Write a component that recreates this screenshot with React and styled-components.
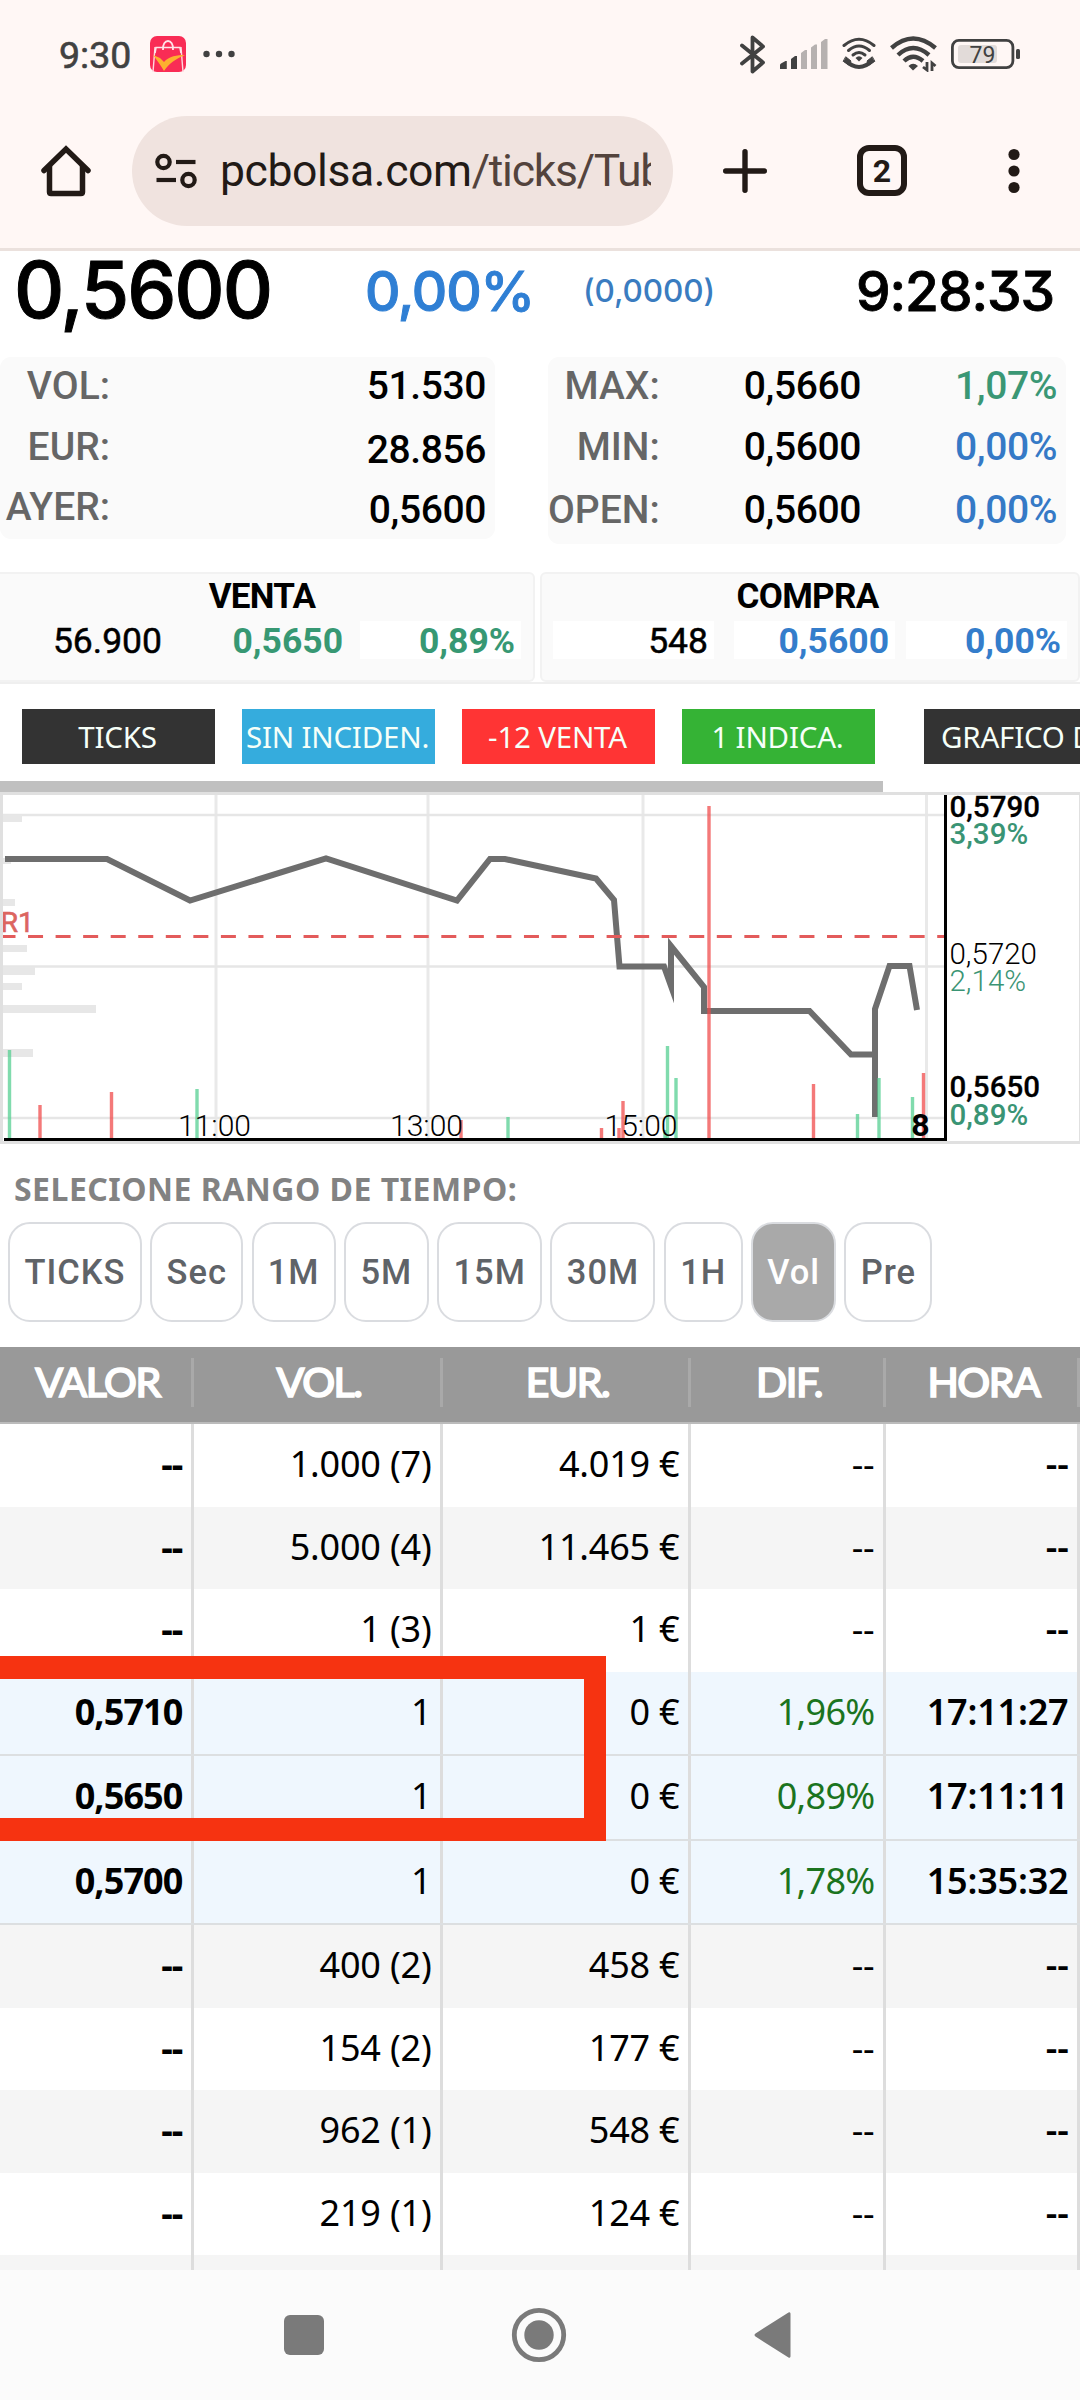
import React, { useState } from 'react';
import styled, { createGlobalStyle } from 'styled-components';

const GlobalStyle = createGlobalStyle`
    body{
        margin:0;
        background:#fff;
        font-family:Roboto, sans-serif;
    }
    *{
        box-sizing:border-box;
    }
`;

const Phone = styled.div`
    width:1080px;
    height:2400px;
    display:flex;
    flex-direction:column;
    overflow:hidden;
    background:#fff;
    color:#000;
    svg{
        display:block;
        flex:none;
    }
`;

/* ---------- android status bar ---------- */

const StatusBar = styled.div`
    height:108px;
    flex:none;
    display:flex;
    align-items:center;
    padding:0 59px 0 59px;
    background:#fff7f5;
    color:#414141;
`;

const Clock = styled.span`
    width:91px;
    font-size:37.5px;
    line-height:40px;
    padding-top:2px;
    -webkit-text-stroke:0.6px #414141;
`;

const StatusIcons = styled.div`
    margin-left:auto;
    display:flex;
    align-items:center;
    gap:14px;
`;

/* ---------- browser toolbar ---------- */

const Toolbar = styled.div`
    height:143px;
    flex:none;
    display:flex;
    align-items:center;
    padding:0 0 15px 41px;
    background:#fff7f5;
    border-bottom:3px solid #ebe1dd;
`;

const Omnibox = styled.div`
    width:541px;
    height:110px;
    margin:0 50px 0 41px;
    padding:0 22px 0 23px;
    display:flex;
    align-items:center;
    border-radius:55px;
    background:#f0e3df;
`;

const Url = styled.div`
    flex:1;
    margin-left:23px;
    overflow:hidden;
    white-space:nowrap;
    font-size:44.5px;
    line-height:70px;
    letter-spacing:-0.4px;
    color:#221a16;
    span{
        letter-spacing:-1.25px;
        color:#53433d;
    }
`;

const TabCount = styled.div`
    width:50px;
    height:51px;
    margin:0 101px 0 90px;
    border:6px solid #221a16;
    border-radius:12px;
    text-align:center;
    font-size:32px;
    line-height:40px;
    font-weight:700;
    color:#221a16;
`;

/* ---------- quote head ---------- */

const QuoteHead = styled.div`
    height:106px;
    flex:none;
    display:grid;
    grid-template-columns:363px 208px 200px 1fr;
    padding:0 26px 0 12px;
    font-family:Inter, sans-serif;
    font-weight:500;
    font-feature-settings:'cv09';
    line-height:1;
    white-space:nowrap;
`;

const LastPrice = styled.span`
    margin-left:2px;
    font-size:78px;
    letter-spacing:-2px;
    -webkit-text-stroke:1px #000;
`;

const LastChange = styled.span`
    margin-top:13px;
    margin-left:-10px;
    font-size:55px;
    letter-spacing:-1.2px;
    color:#2f7fd4;
    -webkit-text-stroke:1px #2f7fd4;
`;

const LastDiff = styled.span`
    margin-top:24px;
    font-size:31.5px;
    letter-spacing:-0.1px;
    color:#3a7cc0;
`;

const LastTime = styled.span`
    margin-top:13px;
    text-align:right;
    font-size:55px;
    letter-spacing:-1.1px;
    -webkit-text-stroke:0.8px #000;
`;

/* ---------- day stats ---------- */

const Stats = styled.div`
    height:215px;
    flex:none;
    display:flex;
    align-items:flex-start;
    gap:53px;
`;

const StatBox = styled.div`
    width:${p => p.$width}px;
    height:${p => p.$height}px;
    display:flex;
    border-radius:11px;
    background:#fafafa;
    font-size:39px;
    font-weight:500;
    line-height:60px;
    text-align:right;
    white-space:nowrap;
`;

const StatCol = styled.div`
    width:${p => p.$width}px;
    height:184px;
    margin-top:-1px;
    display:grid;
    grid-template-rows:${p => p.$rows};
    letter-spacing:${p => p.$label ? '0' : '-0.4px'};
    color:${p => p.$label ? '#666' : '#000'};
`;

const Amount = styled.span`
    color:${p => p.$tone === 'up' ? '#3a9775' : p.$tone === 'flat' ? '#3579c6' : 'inherit'};
`;

/* ---------- bid / ask ---------- */

const Book = styled.div`
    height:112px;
    flex:none;
    display:flex;
    gap:5px;
    border-bottom:2px solid #efefef;
`;

const Side = styled.div`
    width:${p => p.$first ? 535 : 540}px;
    height:110px;
    padding:2px ${p => p.$first ? '11px 0 7px' : '11px 0 11px'};
    border:2px solid #f2f2f2;
    ${p => p.$first && 'border-left:0;'}
    border-radius:${p => p.$first ? '0 6px 6px 0' : '6px'};
    background:#fafafa;
`;

const SideTitle = styled.div`
    height:45px;
    padding-right:5px;
    line-height:42px;
    font-size:35px;
    font-weight:700;
    letter-spacing:-0.7px;
    text-align:center;
`;

const SideRow = styled.div`
    display:grid;
    grid-template-columns:181px 172px 161px;
`;

const SideCell = styled.div`
    width:161px;
    height:38px;
    padding-right:6px;
    line-height:40px;
    font-size:35.5px;
    font-weight:${p => p.$tone ? 700 : 400};
    -webkit-text-stroke:${p => p.$tone ? '0' : '0.5px #000'};
    text-align:right;
    background:${p => p.$flash ? '#fff' : 'transparent'};
    color:${p => p.$tone === 'up' ? '#379873' : p.$tone === 'flat' ? '#347dcb' : '#000'};
`;

/* ---------- links strip ---------- */

const Strip = styled.div`
    height:97px;
    flex:none;
    display:flex;
    align-items:flex-start;
    padding:25px 0 0 22px;
    overflow:hidden;
`;

const StripButton = styled.button`
    width:193px;
    height:55px;
    flex:none;
    margin:0 ${p => p.$gap || 27}px 0 0;
    padding:0 2px 0 0;
    border:0;
    background:${p => p.$bg};
    color:#f6fff8;
    font-family:"Noto Sans", sans-serif;
    font-size:29.5px;
    line-height:55px;
    letter-spacing:-0.2px;
    white-space:nowrap;
    text-align:${p => p.$cut ? 'left' : 'center'};
    ${p => p.$cut && 'padding-left:17px;'}
`;

const ScrollThumb = styled.div`
    width:883px;
    height:11px;
    flex:none;
    background:#c0c0c0;
`;

/* ---------- chart ---------- */

const ChartFrame = styled.div`
    height:352px;
    flex:none;
    overflow:hidden;
    border:3px solid #e0e0e0;
    border-right-width:1px;
`;

/* ---------- time range ---------- */

const RangeTitle = styled.div`
    height:78px;
    flex:none;
    padding:24px 0 0 14px;
    font-family:"Noto Sans", sans-serif;
    font-size:32px;
    font-weight:700;
    line-height:42px;
    letter-spacing:0.48px;
    color:#828282;
    white-space:nowrap;
`;

const Ranges = styled.div`
    height:125px;
    flex:none;
    display:flex;
    gap:8.3px;
    padding-left:8px;
`;

const RangeButton = styled.button`
    width:${p => p.$width}px;
    height:100px;
    padding:0;
    border:2px solid #dadce0;
    border-radius:22px;
    background:${p => p.$active ? '#a9a9a9' : '#fff'};
    color:${p => p.$active ? '#fff' : '#5f6368'};
    font-family:Roboto, sans-serif;
    font-size:34.5px;
    font-weight:500;
    letter-spacing:1px;
`;

/* ---------- ticks table ---------- */

const columns = '194px 249px 248px 195px 194px';

const TableWrap = styled.div`
    height:923px;
    flex:none;
    position:relative;
    overflow:hidden;
`;

const HeadRow = styled.div`
    height:77px;
    display:grid;
    grid-template-columns:${columns};
    align-items:start;
    padding-top:11px;
    background:#999;
    border-bottom:2px solid #bbb;
`;

const HeadCell = styled.div`
    height:49px;
    padding-left:4px;
    border-right:3px solid #a9a9a9;
    color:#fff;
    font-family:Lato, sans-serif;
    font-size:41px;
    font-weight:500;
    line-height:48px;
    letter-spacing:-1.5px;
    text-align:center;
    -webkit-text-stroke:1.6px #fff;
`;

const Row = styled.div`
    height:${p => p.$single ? 84.5 : 82.5}px;
    display:grid;
    grid-template-columns:${columns};
    background:${p => p.$single ? '#eff7fe' : p.$odd ? '#f5f5f5' : '#fff'};
    border-bottom:${p => p.$single ? '2px solid #dcdfe1' : '0'};
`;

const Cell = styled.div`
    padding-right:8.5px;
    border-right:3px solid #ddd;
    font-family:"Noto Sans", sans-serif;
    font-size:36px;
    font-weight:${p => p.$weight || 400};
    line-height:80px;
    letter-spacing:${p => p.$weight === 700 ? '-0.9px' : p.$up ? '-0.7px' : '-0.2px'};
    text-align:right;
    white-space:nowrap;
    color:${p => p.$up ? '#1b741f' : '#000'};
`;

const Marker = styled.div`
    position:absolute;
    left:-30px;
    top:309px;
    width:636px;
    height:185px;
    border:solid #f63311;
    border-width:23px 22px 23px 22px;
`;

/* ---------- android nav bar ---------- */

const NavBar = styled.div`
    height:130px;
    flex:none;
    display:flex;
    align-items:center;
    padding-left:284px;
    background:#fbfbfb;
`;

const AppBadge = () => (
    <svg width="36" height="36" viewBox="0 0 36 36">
        <rect width="36" height="36" rx="7" fill="#f92c55" />
        <path d="M5 11 L3 36 M31 11 L33 36" stroke="#ffd9df" strokeWidth="1.4" fill="none" />
        <path d="M5 17 L6 11.500 H30 L31 17" stroke="#ffe3e8" strokeWidth="1.600" fill="none" />
        <path d="M13 14 C12 2 24 2 23 14" stroke="#ffe3e8" strokeWidth="1.8" fill="none" />
        <path d="M3 19 L10 22 L14 26 C19 20 27 19 35 19 C26 23 19 27 14 35 C11 30 7 24 3 19Z" fill="#fdb02f" />
    </svg>
);

const BluetoothIcon = () => (
    <svg width="26" height="39" viewBox="0 0 26 39">
        <path d="M2 10.500 L23 27.500 L12.500 36.500 V2.500 L23 11.500 L2 28.500" fill="none" stroke="#414141" strokeWidth="3.8" strokeLinecap="round" strokeLinejoin="round" />
    </svg>
);

const SignalIcon = () => (
    <svg width="48" height="32" viewBox="0 0 48 32">
        <path d="M0 31 V27 Q0 26 1 25.500 L5.500 23 H6.800 V31Z" fill="#414141" />
        <path d="M11 31 V21 L15 18 H17 V31Z" fill="#414141" />
        <path d="M21 31 V15 L25 12 H27 V31Z M31 31 V9.500 L35 6.500 H37 V31Z M41 31 V4 L45 1 H47.500 V31Z" fill="#b6b1b0" />
    </svg>
);

const WifiCallIcon = () => (
    <svg width="34" height="34" viewBox="0 0 34 34" fill="none" stroke="#414141" strokeLinecap="round">
        <path d="M2 8.500 Q17 -4 32 8.500" strokeWidth="3" />
        <path d="M6.500 13.500 Q17 4.500 27.500 13.500" strokeWidth="3" />
        <path d="M11 18 Q17 13 23 18" strokeWidth="3" />
        <path d="M13.500 21 Q17 17.500 20.500 21 L17 24.500Z" fill="#414141" stroke="none" />
        <path d="M3 23 Q17 37 31 23" strokeWidth="4" strokeLinecap="butt" />
        <path d="M4 20 L9 24 L7 28 L1.500 24.500Z M30 20 L25 24 L27 28 L32.500 24.500Z" fill="#414141" stroke="#414141" strokeWidth="1" />
    </svg>
);

const WifiIcon = () => (
    <svg width="47" height="36" viewBox="0 0 47 36" fill="none" stroke="#414141" strokeWidth="4.400">
        <path d="M1.500 12 Q23 -7 45.500 12" />
        <path d="M8 19 Q23 5 39 19" />
        <path d="M14 25 Q23 16.500 33 25" />
        <path d="M18.500 30 Q23 25.500 28 30 L23 34.500Z" fill="#414141" stroke="none" />
        <path d="M37 26 V34 L33 31 M42 35 V27 L45.500 30" strokeWidth="2.800" />
    </svg>
);

const BatteryIcon = () => (
    <svg width="70" height="30" viewBox="0 0 70 30">
        <rect x="1.400" y="1.400" width="60.500" height="27.200" rx="6.500" fill="none" stroke="#414141" strokeWidth="2.800" />
        <rect x="7" y="6" width="39" height="18" rx="3" fill="#e2dbd9" />
        <rect x="65" y="10" width="4" height="10" rx="1.500" fill="#414141" />
        <text x="31.500" y="23.500" textAnchor="middle" fontFamily="Roboto, sans-serif" fontSize="23" fill="#414141">79</text>
    </svg>
);

const HomeIcon = () => (
    <svg width="50" height="52" viewBox="0 0 50 52">
        <path d="M3 25.500 L25 4 L47 25.500" fill="none" stroke="#221a16" strokeWidth="5.500" strokeLinecap="round" strokeLinejoin="miter" />
        <path d="M8.500 21 V47 Q8.500 48.500 10 48.500 H40 Q41.500 48.500 41.500 47 V21" fill="none" stroke="#221a16" strokeWidth="5.500" />
    </svg>
);

const SiteIcon = () => (
    <svg width="42" height="36" viewBox="0 0 42 36" fill="none" stroke="#221a16" strokeWidth="4.200">
        <circle cx="8.500" cy="9" r="6.200" />
        <path d="M21 9 H40.500" />
        <path d="M1.500 27 H21" />
        <circle cx="33.500" cy="27" r="6.200" />
    </svg>
);

const profile = [[20, 7, 19], [63, 6, 8], [104, 7, 12], [150, 7, 24], [172, 8, 32], [188, 7, 19], [210, 8, 93], [254, 8, 30]];

// [x, top, color]
const volumes = [
    [9.5, 1050, 'g'], [40, 1105, 'r'], [111.500, 1092, 'r'], [197, 1089, 'g'], [461, 1120, 'r'], [508, 1117, 'g'],
    [601.500, 1128, 'r'], [619, 1128, 'r'], [623, 1101, 'r'], [665, 1130, 'g'], [667.500, 1046, 'g'], [676, 1078, 'g'], [709, 806, 'r'],
    [813.500, 1084, 'r'], [857.500, 1114, 'g'], [879, 1078, 'g'], [912.500, 1097, 'g'], [923.500, 1073, 'r'],
];

const scale = [
    ['0,5790', 816.5, '3,39%', 843.5, 500],
    ['0,5720', 963.5, '2,14%', 990.5, 300],
    ['0,5650', 1096.5, '0,89%', 1125, 500],
];

const Chart = () => (
    <svg width="1076" height="346" viewBox="3 795 1076 346" fontFamily="Roboto, sans-serif">
        <path d="M216 795 V1138 M428 795 V1138 M643 795 V1138 M926.500 795 V1138" stroke="#e9e9e9" strokeWidth="3" />
        <path d="M3 815 H944 M3 966.500 H944 M3 1118 H944" stroke="#e6e6e6" strokeWidth="2.400" />
        {profile.map(([y, h, w]) => (
            <rect key={y} x="3" y={795 + y} width={w} height={h} fill="#e7e7e7" />
        ))}
        <path
            d="M5 859 H107 L190 900.500 L326 858.500 L457 900.500 L490 859 H505 L596 878.500 L614 900 L619.500 966.500 H664 L671 986 V946 L704 987 V1011 H809.500 L851 1054.500 H875 V1117 V1009 L889.500 966 H909.500 L917 1010"
            fill="none"
            stroke="#6e6e6e"
            strokeWidth="6"
            strokeMiterlimit="8"
        />
        {volumes.map(([x, top, c]) => (
            <path key={x} d={`M${x} ${top} V1138`} stroke={c === 'g' ? '#55cf92' : '#f04c4c'} strokeOpacity="0.75" strokeWidth="3.400" />
        ))}
        <path d="M0.500 936.500 H944" stroke="#e35b5b" strokeWidth="3" strokeDasharray="15 12.550" />
        <text x="0.500" y="932" fontSize="28.500" fill="#dc655f" stroke="#dc655f" strokeWidth="0.600">R1</text>
        <g fontSize="30" fontWeight="300" textAnchor="middle" fill="#000">
            <text x="214.500" y="1136">11:00</text>
            <text x="426.500" y="1136">13:00</text>
            <text x="641" y="1136">15:00</text>
            <text x="920.500" y="1136" fontSize="32" fontWeight="700">8</text>
        </g>
        <path d="M4 1139.500 H945.500 V795" fill="none" stroke="#000" strokeWidth="3" />
        {scale.map(([price, y1, pct, y2, weight]) => (
            <g key={price} fontSize="29.500" fontWeight={weight}>
                <text x="949.500" y={y1} fill="#000" stroke="#000" strokeWidth={weight === 500 ? 0.3 : 0}>{price}</text>
                <text x="949.500" y={y2} fill="#3a9474">{pct}</text>
            </g>
        ))}
    </svg>
);

const ranges = [['TICKS', 134], ['Sec', 93], ['1M', 84], ['5M', 85], ['15M', 105], ['30M', 105], ['1H', 79], ['Vol', 85], ['Pre', 88]];

const ticks = [
    { valor: '--', vol: '1.000 (7)', eur: '4.019 €', dif: '--', hora: '--' },
    { valor: '--', vol: '5.000 (4)', eur: '11.465 €', dif: '--', hora: '--', odd: true },
    { valor: '--', vol: '1 (3)', eur: '1 €', dif: '--', hora: '--' },
    { valor: '0,5710', vol: '1', eur: '0 €', dif: '1,96%', hora: '17:11:27', single: true },
    { valor: '0,5650', vol: '1', eur: '0 €', dif: '0,89%', hora: '17:11:11', single: true },
    { valor: '0,5700', vol: '1', eur: '0 €', dif: '1,78%', hora: '15:35:32', single: true },
    { valor: '--', vol: '400 (2)', eur: '458 €', dif: '--', hora: '--', odd: true },
    { valor: '--', vol: '154 (2)', eur: '177 €', dif: '--', hora: '--' },
    { valor: '--', vol: '962 (1)', eur: '548 €', dif: '--', hora: '--', odd: true },
    { valor: '--', vol: '219 (1)', eur: '124 €', dif: '--', hora: '--' },
    { valor: '', vol: '', eur: '', dif: '', hora: '', odd: true },
];

const App = () => {

    const [range, setRange] = useState('Vol');

    return (
        <>
        <GlobalStyle />
        <Phone>
            <StatusBar>
                <Clock>9:30</Clock>
                <AppBadge />
                <svg width="50" height="8" viewBox="0 0 50 8">
                    <g fill="#414141"><circle cx="20.500" cy="4" r="3.200" /><circle cx="33" cy="4" r="3.200" /><circle cx="45.500" cy="4" r="3.200" /></g>
                </svg>
                <StatusIcons>
                    <BluetoothIcon />
                    <SignalIcon />
                    <WifiCallIcon />
                    <WifiIcon />
                    <BatteryIcon />
                </StatusIcons>
            </StatusBar>

            <Toolbar>
                <HomeIcon />
                <Omnibox>
                    <SiteIcon />
                    <Url>pcbolsa.com<span>/ticks/Tubacex</span></Url>
                </Omnibox>
                <svg width="44" height="44" viewBox="0 0 44 44">
                    <path d="M22 2.700 V41.300 M2.700 22 H41.300" stroke="#221a16" strokeWidth="5.400" strokeLinecap="round" />
                </svg>
                <TabCount>2</TabCount>
                <svg width="12" height="46" viewBox="0 0 12 46">
                    <g fill="#221a16"><circle cx="6" cy="6.500" r="5.600" /><circle cx="6" cy="23" r="5.600" /><circle cx="6" cy="39.500" r="5.600" /></g>
                </svg>
            </Toolbar>

            <QuoteHead>
                <LastPrice>0,5600</LastPrice>
                <LastChange>0,00%</LastChange>
                <LastDiff>(0,0000)</LastDiff>
                <LastTime>9:28:33</LastTime>
            </QuoteHead>

            <Stats>
                <StatBox $width={495} $height={182}>
                    <StatCol $width={110} $rows="60.5px 60.5px 60px" $label>
                        <span>VOL:</span><span>EUR:</span><span>AYER:</span>
                    </StatCol>
                    <StatCol $width={376} $rows="64px 60px 60px">
                        <span>51.530</span><span>28.856</span><span>0,5600</span>
                    </StatCol>
                </StatBox>
                <StatBox $width={518} $height={187}>
                    <StatCol $width={111} $rows="61px 63px 60px" $label>
                        <span>MAX:</span><span>MIN:</span><span>OPEN:</span>
                    </StatCol>
                    <StatCol $width={202} $rows="61px 63px 60px">
                        <span>0,5660</span><span>0,5600</span><span>0,5600</span>
                    </StatCol>
                    <StatCol $width={196} $rows="61px 63px 60px">
                        <Amount $tone="up">1,07%</Amount><Amount $tone="flat">0,00%</Amount><Amount $tone="flat">0,00%</Amount>
                    </StatCol>
                </StatBox>
            </Stats>

            <Book>
                <Side $first>
                    <SideTitle>VENTA</SideTitle>
                    <SideRow>
                        <SideCell>56.900</SideCell>
                        <SideCell $tone="up">0,5650</SideCell>
                        <SideCell $tone="up" $flash>0,89%</SideCell>
                    </SideRow>
                </Side>
                <Side>
                    <SideTitle>COMPRA</SideTitle>
                    <SideRow>
                        <SideCell $flash>548</SideCell>
                        <SideCell $tone="flat" $flash>0,5600</SideCell>
                        <SideCell $tone="flat" $flash>0,00%</SideCell>
                    </SideRow>
                </Side>
            </Book>

            <Strip>
                <StripButton $bg="#333">TICKS</StripButton>
                <StripButton $bg="#35acdd">SIN INCIDEN.</StripButton>
                <StripButton $bg="#ff3434">-12 VENTA</StripButton>
                <StripButton $bg="#35b335" $gap={49}>1 INDICA.</StripButton>
                <StripButton $bg="#333" $cut>GRAFICO D</StripButton>
            </Strip>
            <ScrollThumb />

            <ChartFrame>
                <Chart />
            </ChartFrame>

            <RangeTitle>SELECIONE RANGO DE TIEMPO:</RangeTitle>
            <Ranges>
                {ranges.map(([name, width]) => (
                    <RangeButton key={name} $width={width} $active={name === range} onClick={() => setRange(name)}>{name}</RangeButton>
                ))}
            </Ranges>

            <TableWrap>
                <HeadRow>
                    <HeadCell>VALOR</HeadCell>
                    <HeadCell>VOL.</HeadCell>
                    <HeadCell>EUR.</HeadCell>
                    <HeadCell>DIF.</HeadCell>
                    <HeadCell>HORA</HeadCell>
                </HeadRow>
                {ticks.map((t, i) => (
                    <Row key={i} $single={t.single} $odd={t.odd}>
                        <Cell $weight={700}>{t.valor}</Cell>
                        <Cell>{t.vol}</Cell>
                        <Cell>{t.eur}</Cell>
                        <Cell $up={t.single}>{t.dif}</Cell>
                        <Cell $weight={600}>{t.hora}</Cell>
                    </Row>
                ))}
                <Marker />
            </TableWrap>

            <NavBar>
                <svg width="40" height="40"><rect width="40" height="40" rx="6" fill="#7a7a7a" /></svg>
                <svg width="402" height="56" viewBox="0 0 402 56">
                    <circle cx="215" cy="28" r="24.700" fill="none" stroke="#7a7a7a" strokeWidth="4.800" />
                    <circle cx="215" cy="28" r="14.700" fill="#7a7a7a" />
                </svg>
                <svg width="66" height="48" viewBox="0 0 66 48">
                    <path d="M64.500 2.500 V45.500 Q64 47.500 62.500 46.500 L29.500 25.500 Q27.500 24 29.500 22.500 L62.500 1.500 Q64 0.500 64.500 2.500Z" fill="#7a7a7a" />
                </svg>
            </NavBar>
        </Phone>
        </>
    );
};

export default App;
